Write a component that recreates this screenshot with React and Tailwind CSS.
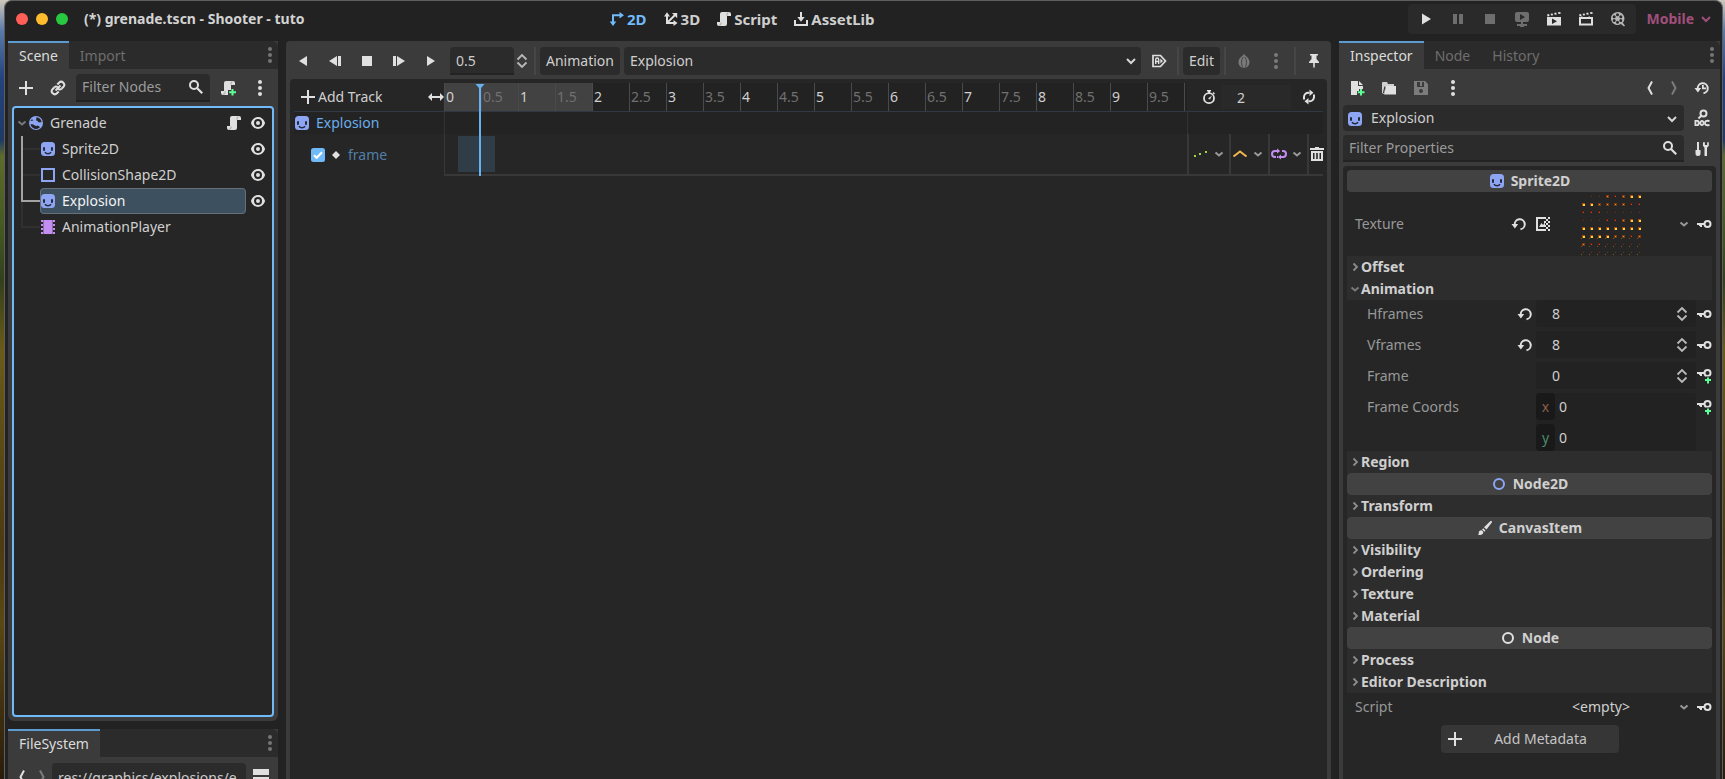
import React from "react";

/* ---------- icons (16px grid) ---------- */

function Svg({ children, className = "text-[#e0e0e0]", w = 16, h = 16 }) {
  return (
    <svg width={w} height={h} viewBox={`0 0 ${w} ${h}`} className={`shrink-0 ${className}`} fill="currentColor" aria-hidden="true">
      {children}
    </svg>
  );
}

const Plus = ({ className }) => (
  <Svg className={className}><path d="M7 1h2v6h6v2H9v6H7V9H1V7h6z" /></Svg>
);
const Dots = ({ className }) => (
  <Svg className={className}>
    <circle cx="8" cy="2" r="2" /><circle cx="8" cy="8" r="2" /><circle cx="8" cy="14" r="2" />
  </Svg>
);
const Link = () => (
  <Svg>
    <g transform="rotate(-45 8 8)" fill="none" stroke="currentColor" strokeWidth="2">
      <path d="M6 5H3.500a3 3 0 0 0 0 6H6M10 5h2.500a3 3 0 0 1 0 6H10M4.500 8h7" />
      <path d="M6 5c2 0 2.500 1.500 2.500 3M10 11c-2 0-2.500-1.500-2.500-3" />
    </g>
  </Svg>
);
const Search = () => (
  <Svg>
    <g fill="none" stroke="currentColor">
      <circle cx="6" cy="6" r="4" strokeWidth="2" />
      <path d="M9.200 9.200l5 5" strokeWidth="2.200" />
    </g>
  </Svg>
);
const scrollPath = "M6 1a2 2 0 0 0-2 2v8H1v2a2 2 0 0 0 2 2h6a2 2 0 0 0 2-2V5h4V3a2 2 0 0 0-2-2z";
const ScrollFolds = () => (
  <g fill="none" stroke="#303030" strokeWidth="0.800">
    <path d="M5 11.500v1.500a1.300 1.300 0 0 1-2 1" opacity="0.400" />
    <path d="M11 4.800V3.200a1.300 1.300 0 0 1 1.500-1.400" opacity="0.400" />
  </g>
);
const Script = ({ className }) => (
  <Svg className={className}><path d={scrollPath} /><ScrollFolds /></Svg>
);
const ScriptAdd = () => (
  <Svg>
    <path d="M6 1a2 2 0 0 0-2 2v8H1v2a2 2 0 0 0 2 2h5v-5h3V8V5h4V3a2 2 0 0 0-2-2z" />
    <ScrollFolds />
    <path d="M11.500 9h2v2.300H16v2h-2.500V15.500h-2v-2.200H9.200v-2h2.300z" fill="#5fff97" />
  </Svg>
);
const Eye = () => (
  <Svg>
    <path fillRule="evenodd" d="M8 2C5.400 2 2.200 4 1 7.700v.6C2.200 12.200 5.500 14 8 14s5.800-1.800 7-5.700v-.6C13.900 4 10.600 2 8 2zm0 2a4 4 0 0 1 0 8 4 4 0 0 1 0-8zm0 2a2 2 0 1 0 0 4 2 2 0 0 0 0-4z" />
  </Svg>
);
const ChevronDown = ({ className }) => (
  <Svg className={className}><path d="M4 6l4 4 4-4" fill="none" stroke="currentColor" strokeWidth="2" /></Svg>
);
const SmallDown = ({ className = "text-[#9a9a9a]" }) => (
  <Svg className={className} w={12} h={12}><path d="M2.500 4.500L6 7.500l3.500-3" fill="none" stroke="currentColor" strokeWidth="2" /></Svg>
);
const SmallRight = () => (
  <Svg className="text-[#8c8c8c]" w={12} h={12}><path d="M4.500 2.500L8 6 4.500 9.500" fill="none" stroke="currentColor" strokeWidth="1.800" /></Svg>
);
const Sprite = () => (
  <Svg className="text-[#8da5f3]">
    <rect x="1" y="1" width="14" height="14" rx="3.500" />
    <g fill="#252a3a">
      <rect x="3" y="6" width="2" height="4" rx="1" />
      <rect x="11" y="6" width="2" height="4" rx="1" />
    </g>
    <path d="M5 11.200c1.200 2.200 4.800 2.200 6 0" fill="none" stroke="#252a3a" strokeWidth="1.500" />
  </Svg>
);
const RigidBody = () => (
  <Svg className="text-[#8da5f3]">
    <circle cx="8" cy="8" r="7" />
    <path d="M8.300 2.300a5.700 5.700 0 0 1 5.300 5c-1-.2-2-.2-2.900.1A3.200 3.200 0 0 0 8 5.300c.4-1 .5-2 .3-3z" fill="#262626" />
    <path d="M2.400 9.500c1.500-.4 2.700-.3 3.800.5a3.200 3.200 0 0 0 3.600.6c.9.300 1.600.9 2.200 1.600A5.700 5.700 0 0 1 2.400 9.500z" fill="#262626" />
    <path d="M4 4.200l1.400 1.300-2.900.6A5 5 0 0 1 4 4.200z" fill="#262626" />
  </Svg>
);
const Collision = () => (
  <Svg className="text-[#8da5f3]"><path fillRule="evenodd" d="M1 1h14v14H1zM3 3v10h10V3z" /></Svg>
);
const AnimPlayer = () => (
  <Svg className="text-[#c38ef1]">
    <path fillRule="evenodd" d="M1 1h14v14H1zM1 3v2h2V3zM1 7v2h2V7zM1 11v2h2v-2zM13 3v2h2V3zM13 7v2h2V7zM13 11v2h2v-2z" />
    <path d="M3.500 1v14M12.500 1v14" stroke="#262626" strokeWidth="1" opacity="0.350" />
  </Svg>
);
const Undo = () => (
  <Svg>
    <path d="M3.800 9A5 5 0 1 1 9.500 13.200" fill="none" stroke="currentColor" strokeWidth="2" />
    <path d="M0.500 8h6.700l-3.300 4.500z" />
  </Svg>
);
const Key = ({ plus }) => (
  <Svg>
    <circle cx="11.500" cy={plus ? 5 : 8} r="3" fill="none" stroke="currentColor" strokeWidth="2" />
    <path d={plus ? "M1 4h8v2H6v2H4V7H3V6H1z" : "M1 7h8v2H6v2H4v-1H3V9H1z"} />
    {plus && (
      <>
        <path d="M10 8.500h4V10h2v4h-2v2h-4v-2H8v-4h2z" fill="#262626" />
        <path d="M11 9.500h2V11h2v2h-2v2.500h-2V13H9v-2h2z" fill="#5fff97" />
      </>
    )}
  </Svg>
);
const Spin = () => (
  <Svg className="text-[#b9b9b9]">
    <path d="M3.500 6.500L8 2l4.500 4.500M3.500 9.500L8 14l4.500-4.500" fill="none" stroke="currentColor" strokeWidth="1.800" />
  </Svg>
);
const Ring = ({ className }) => (
  <Svg className={className}><circle cx="8" cy="8" r="5" fill="none" stroke="currentColor" strokeWidth="2" /></Svg>
);
const Brush = () => (
  <Svg>
    <path d="M14.500 1c.6.300.7.900.3 1.500L9.500 9.500 7 7.200l6-5.800c.5-.5 1-.6 1.500-.4zM6.200 8.200l2.300 2.200-1.200 1.300-2.200-2.200z" />
    <path d="M4 10.200c1.500.2 2.500 1.300 2.300 2.500C6 14.500 3.500 15.300 1 15c1-.8.6-1.600.8-2.800.2-1.300 1.200-2 2.200-2z" />
  </Svg>
);
const Chev = ({ right, className }) => (
  <Svg className={className}>
    <path d={right ? "M6 1.500L9.500 8 6 14.500" : "M10 1.500L6.500 8l3.500 6.500"} fill="none" stroke="currentColor" strokeWidth="2" />
  </Svg>
);
const Clapper = ({ play }) => (
  <Svg>
    <path d="M1 3.600l2-.5.600 1.800-2 .5zM4.600 2.800l2-.4.500 1.800-2 .4zM8.200 2l2-.4.500 1.800-2 .4zM12 1.300l2.300-.4.400 1.800-2.300.4z" />
    {play ? (
      <path fillRule="evenodd" d="M1 6h14v8.500H1zM6 7.500v5.500l5-2.750z" />
    ) : (
      <path fillRule="evenodd" d="M1 6h2V5.500h1.500V6h6V5.500H12V6h3v8.500H1zM3 8v4.500h10V8z" />
    )}
  </Svg>
);
const Film = () => (
  <Svg className="text-[#b5b5b5]">
    <path fillRule="evenodd" d="M7.500 1a6.500 6.500 0 1 0 3.300 12.100L14 15.500l1-.8-2.200-3A6.500 6.500 0 0 0 7.500 1zM7.500 2.300a1.500 1.500 0 1 1 0 3 1.500 1.500 0 0 1 0-3zM4.200 4.300a1.500 1.500 0 1 1 0 3 1.500 1.500 0 0 1 0-3zM10.800 4.300a1.500 1.500 0 1 1 0 3 1.500 1.500 0 0 1 0-3zM4.200 8a1.500 1.500 0 1 1 0 3 1.500 1.500 0 0 1 0-3zM10.800 8a1.500 1.500 0 1 1 0 3 1.500 1.500 0 0 1 0-3zM7.500 9.800a1.500 1.500 0 1 1 0 3 1.500 1.500 0 0 1 0-3z" />
  </Svg>
);
const Remote = () => (
  <Svg className="text-[#6e6e6e]">
    <path fillRule="evenodd" d="M3 1h10a2 2 0 0 1 2 2v6a2 2 0 0 1-2 2H9v2h4v2h-3a2 2 0 0 1-4 0H3v-2h4v-2H3a2 2 0 0 1-2-2V3a2 2 0 0 1 2-2zM6 3v6l5-3z" />
  </Svg>
);
const Disk = () => (
  <Svg className="text-[#7c7c7c]">
    <path fillRule="evenodd" d="M1 1h11l3 3v11H1zM4 2v5h7V2H9v4H7V2zM8 9a2 2 0 1 0 0 4 2 2 0 0 0 0-4z" />
  </Svg>
);
const Doc = () => (
  <Svg w={16} h={18}>
    <circle cx="9.500" cy="4.500" r="3" fill="none" stroke="currentColor" strokeWidth="2" />
    <path d="M7.500 6.500L4.500 9.500" stroke="currentColor" strokeWidth="2" />
    <path fillRule="evenodd" d="M0.500 11h3.200c1.500 0 2 1.500 2 3s-.5 3-2 3H.5zM2.300 12.700v2.600h.9c.8 0 .8-2.600 0-2.600zM8 11c3.200 0 3.200 6 0 6s-3.200-6 0-6zm0 1.700c-1 0-1 2.600 0 2.600s1-2.600 0-2.600z" />
    <path d="M15.500 12c-3.500-.6-4.500 0-4.500 2s1 2.600 4.500 2" fill="none" stroke="currentColor" strokeWidth="1.900" />
  </Svg>
);
const Tools = () => (
  <Svg>
    <path d="M3 1h2v8h1.500v3.500a2 2 0 0 1-5 0V9H3zM9 1.300v3.500l1.500 2V15h2.500V6.800l1.800-2V1.300h-1.600v2.800h-2.300V1.300z" />
  </Svg>
);
const History = () => (
  <Svg>
    <path d="M3.800 9A5 5 0 1 1 9.500 13.200" fill="none" stroke="currentColor" strokeWidth="2" />
    <path d="M0.500 8h6.700l-3.300 4.500zM8 5h1.800v2.500H12V9.200H8z" />
  </Svg>
);
const Stopwatch = () => (
  <Svg>
    <circle cx="8" cy="9.200" r="5" fill="none" stroke="currentColor" strokeWidth="1.800" />
    <path d="M6 1h4v1.600H9v2H7v-2H6zM12.500 3l1.500 1.500-1 1L11.500 4zM7 9.500L11 6.500 9 10.500z" />
  </Svg>
);
const Loop = ({ className }) => (
  <Svg className={className}>
    <path d="M3 10.500V8a4.300 4.300 0 0 1 4.500-4.300h1M13 5.500V8a4.300 4.300 0 0 1-4.500 4.300h-1" fill="none" stroke="currentColor" strokeWidth="2" />
    <path d="M8.500 0.500v6.400l4-3.200zM7.500 9.100v6.400l-4-3.200z" />
  </Svg>
);
const Trash = () => (
  <Svg>
    <path d="M6 1h4v1h5v2H1V2h5z" />
    <path fillRule="evenodd" d="M2 5h12v10H2zM4 7v6h1.500V7zM7.200 7v6h1.600V7zM10.500 7v6H12V7z" />
  </Svg>
);
const Pin = () => (
  <Svg><path d="M4 1h8v1.500h-1.500V6L13 9v1H8.800v3.500L8 15.500l-.8-2V10H3V9l2.500-3V2.500H4z" /></Svg>
);
const AutoPlay = () => (
  <Svg>
    <path d="M2 2.500h7.500L14.500 8l-5 5.500H2z" fill="none" stroke="currentColor" strokeWidth="1.700" />
    <path d="M4.700 11V6.500a1.500 1.500 0 0 1 3 0V11M4.700 8.500h3" fill="none" stroke="currentColor" strokeWidth="1.400" />
    <path d="M9.300 5.500L12 8l-2.700 2.500z" />
  </Svg>
);
const Onion = () => (
  <Svg className="text-[#7a7a7a]">
    <path d="M8 .5c0 2-5.500 4-5.500 8.500 0 3.500 2.500 5.800 5.500 6 3-.2 5.500-2.500 5.500-6C13.500 4.500 8 2.500 8 .5z" />
    <path d="M7.300 4C5 7 5 11.500 7 14.500M8.700 4C11 7 11 11.500 9 14.500" fill="none" stroke="#3b3b3b" strokeWidth="0.900" />
  </Svg>
);
const Axes2D = () => (
  <Svg>
    <path d="M4 12V4.300h7" fill="none" stroke="currentColor" strokeWidth="2" />
    <path d="M10.500 1v6.600L15 4.300zM.7 10.500h6.600L4 15z" />
  </Svg>
);
const Axes3D = () => (
  <Svg>
    <path d="M4 4v8h7M4 12l8-8" fill="none" stroke="currentColor" strokeWidth="2" />
    <path d="M1 5.500h6L4 1.200zM10.500 9v6l4-3zM9 2h5.200v5.200z" />
  </Svg>
);
const Asset = () => (
  <Svg>
    <path d="M2 9v5h12V9" fill="none" stroke="currentColor" strokeWidth="2" />
    <path d="M7 1h2v5h2.700L8 10.800 4.300 6H7z" />
  </Svg>
);
const TexIcon = () => (
  <Svg>
    <path d="M1 1h8v2H3v10h6v2H1z" />
    <path d="M4 11l2.500-4L8 9l2-2.500V11z" />
    <path d="M9 1h2v2H9zM13 1h2v2h-2zM11 3h2v2h-2zM9 5h2v2H9zM13 5h2v2h-2zM11 7h2v2h-2zM9 9h2v2H9zM13 9h2v2h-2zM11 11h2v2h-2zM9 13h2v2H9zM13 13h2v2h-2z" />
  </Svg>
);

/* ---------- shared controls ---------- */

function IconButton({ label, children, className = "h-7 w-8" }) {
  return (
    <button type="button" aria-label={label} className={`flex shrink-0 items-center justify-center ${className}`}>
      {children}
    </button>
  );
}

function DockTabs({ tabs }) {
  return (
    <div className="flex h-7 shrink-0 items-stretch rounded-tr-md bg-[#2b2b2b]" role="tablist">
      {tabs.map((t, i) => (
        <button
          key={t}
          type="button"
          role="tab"
          aria-selected={i === 0}
          className={
            i === 0
              ? "border-t-2 border-[#5b9bd0] bg-[#3b3b3b] px-[11px] text-[#dcdcdc]"
              : "border-t-2 border-transparent px-[11px] text-[#6e6e6e]"
          }
        >
          {t}
        </button>
      ))}
      <IconButton label="Dock options" className="ml-auto w-4">
        <Dots className="text-[#757575]" />
      </IconButton>
    </div>
  );
}

const Sep = ({ className = "mx-1" }) => <div className={`h-7 w-0.5 shrink-0 bg-[#464646] ${className}`} />;

/* ---------- scene tree ---------- */

function Connector({ kind }) {
  return (
    <svg width="20" height="26" className="shrink-0" aria-hidden="true">
      {kind === "pass" && (
        <>
          <path d="M2 13h18" stroke="#303030" strokeWidth="2" />
          <path d="M2 0v26" stroke="#a3a3a3" strokeWidth="2" />
        </>
      )}
      {kind === "active" && (
        <>
          <path d="M2 13v13" stroke="#303030" strokeWidth="2" />
          <path d="M2 0v13h18" fill="none" stroke="#a3a3a3" strokeWidth="2" />
        </>
      )}
      {kind === "last" && <path d="M2 0v13h18" fill="none" stroke="#303030" strokeWidth="2" />}
    </svg>
  );
}

const treeNodes = [
  { name: "Sprite2D", icon: <Sprite />, kind: "pass", eye: true },
  { name: "CollisionShape2D", icon: <Collision />, kind: "pass", eye: true },
  { name: "Explosion", icon: <Sprite />, kind: "active", eye: true, selected: true },
  { name: "AnimationPlayer", icon: <AnimPlayer />, kind: "last" },
];

function SceneDock() {
  return (
    <section className="flex min-h-0 flex-1 flex-col rounded-b-md bg-[#3b3b3b]">
      <DockTabs tabs={["Scene", "Import"]} />
      <div className="flex h-[37px] shrink-0 items-center pt-px px-0.5">
        <IconButton label="Add node"><Plus /></IconButton>
        <IconButton label="Instantiate scene"><Link /></IconButton>
        <label className="mx-0.5 flex h-7 min-w-0 flex-1 items-center rounded-t border-b-2 border-[#232323] bg-[#2b2b2b] px-1.5">
          <input aria-label="Filter Nodes" placeholder="Filter Nodes" className="w-full min-w-0 flex-1 bg-transparent placeholder:text-[#9b9b9b] outline-none" />
          <Search />
        </label>
        <IconButton label="Attach script"><ScriptAdd /></IconButton>
        <IconButton label="More scene options"><Dots /></IconButton>
      </div>
      <div className="mx-1 mb-1 flex-1 rounded-sm border-2 border-[#70bafa] bg-[#262626] pt-0.5">
        <div className="flex h-[26px] items-center pr-1.5 pl-0.5">
          <SmallDown className="text-[#7a7a7a]" />
          <span className="flex flex-1 items-center gap-1.5 text-[#d0d0d0]"><RigidBody />Grenade</span>
          <Script className="mr-2 text-[#e0e0e0]" />
          <button type="button" aria-label="Toggle visibility of Grenade"><Eye /></button>
        </div>
        {treeNodes.map((n) => (
          <div key={n.name} className="flex h-[26px] items-center pr-1.5 pl-1.5">
            <Connector kind={n.kind} />
            <div
              className={
                n.selected
                  ? "flex h-full flex-1 items-center gap-1.5 rounded-sm bg-[#3d5060] text-[#f2f2f2] outline -outline-offset-1 outline-[#667079]"
                  : "flex h-full flex-1 items-center gap-1.5 text-[#d0d0d0]"
              }
            >
              {n.icon}{n.name}
            </div>
            <div className="ml-1 flex w-4">
              {n.eye && <button type="button" aria-label={`Toggle visibility of ${n.name}`}><Eye /></button>}
            </div>
          </div>
        ))}
      </div>
    </section>
  );
}

function FileSystemDock() {
  return (
    <section className="h-[50px] shrink-0 overflow-hidden bg-[#3b3b3b]">
      <DockTabs tabs={["FileSystem"]} />
      <div className="flex items-start pt-1.5 pl-0.5">
        <IconButton label="Back" className="h-7 w-6"><Chev className="text-[#e0e0e0]" /></IconButton>
        <IconButton label="Forward" className="mr-0.5 h-7 w-4"><Chev right className="text-[#7c7c7c]" /></IconButton>
        <input
          aria-label="Path"
          defaultValue="res://graphics/explosions/e"
          className="h-7 min-w-0 flex-1 rounded bg-[#2b2b2b] px-1.5 text-[#cccccc] outline-none"
        />
        <IconButton label="Change split mode" className="mr-0.5 h-7 w-[30px]">
          <Svg className="text-[#e0e0e0]"><path d="M0 0h16v6H0zM0 8h16v6H0z" /></Svg>
        </IconButton>
      </div>
    </section>
  );
}

/* ---------- animation editor ---------- */

const ticks = Array.from({ length: 20 }, (_, i) => i / 2);

function Transport() {
  return (
    <div className="flex h-[38px] shrink-0 items-center px-px pt-0.5">
      <IconButton label="Play backwards"><Svg><path d="M12 3v10L4 8z" /></Svg></IconButton>
      <IconButton label="Play backwards from current"><Svg><path d="M10 3v10L2 8zM11 3h3v10h-3z" /></Svg></IconButton>
      <IconButton label="Stop"><Svg><path d="M3 3h10v10H3z" /></Svg></IconButton>
      <IconButton label="Play from current"><Svg><path d="M6 3v10l8-5zM2 3h3v10H2z" /></Svg></IconButton>
      <IconButton label="Play"><Svg><path d="M4 3v10l8-5z" /></Svg></IconButton>
      <input aria-label="Animation position" defaultValue="0.5" className="ml-[3px] h-7 w-16 rounded-t border-b-2 border-[#232323] bg-[#2b2b2b] px-1.5 text-[#cccccc] outline-none" />
      <IconButton label="Step position" className="h-7 w-4"><Spin /></IconButton>
      <Sep />
      <button type="button" className="h-7 rounded bg-[#2b2b2b] px-1.5 text-[#cfcfcf]">Animation</button>
      <div className="relative ml-1 min-w-0 flex-1">
        <select aria-label="Current animation" className="h-7 w-full appearance-none rounded bg-[#2b2b2b] px-1.5 text-[#cfcfcf] outline-none">
          <option>Explosion</option>
        </select>
        <span className="pointer-events-none absolute top-1.5 right-0.5"><ChevronDown className="text-[#d5d5d5]" /></span>
      </div>
      <IconButton label="Autoplay on load" className="ml-0.5 h-7 w-8"><AutoPlay /></IconButton>
      <Sep className="mr-1 ml-0.5" />
      <button type="button" className="h-7 rounded bg-[#2b2b2b] px-1.5 text-[#cfcfcf]">Edit</button>
      <Sep className="mr-0.5 ml-1" />
      <IconButton label="Onion skinning"><Onion /></IconButton>
      <IconButton label="Onion skinning options"><Dots className="text-[#7a7a7a]" /></IconButton>
      <Sep className="mx-0.5" />
      <IconButton label="Pin animation player"><Pin /></IconButton>
    </div>
  );
}

function TrackOption({ label, children, className = "w-[39px]" }) {
  return (
    <button type="button" aria-label={label} className={`flex shrink-0 items-center justify-end gap-1 border-l-2 border-[#383838] pr-1 ${className}`}>
      {children}
      <SmallDown />
    </button>
  );
}

function AnimationPanel() {
  return (
    <main className="flex min-w-0 flex-1 flex-col rounded-t bg-[#3b3b3b]">
      <Transport />
      <div className="mx-1 flex-1 rounded-t bg-[#262626] p-1">
        <div className="relative">
          <div className="flex h-7 items-stretch">
            <div className="flex w-[150px] shrink-0 items-center pl-1.5">
              <button type="button" className="flex items-center gap-0.5 text-[#cfcfcf]"><Plus />Add Track</button>
              <span className="ml-auto">
                <Svg><path d="M4 7h8V4l4 4-4 4V9H4v3L0 8l4-4z" /></Svg>
              </span>
            </div>
            <div className="flex min-w-0 flex-1 overflow-hidden bg-[#222222]">
              {ticks.map((t) => (
                <div
                  key={t}
                  className={`flex w-[37px] shrink-0 items-center border-l border-[#4a4a4a] pl-px ${t < 2 ? "bg-[#424242]" : ""} ${Number.isInteger(t) ? "text-[#d0d0d0]" : "text-[#707070]"}`}
                >
                  {t}
                </div>
              ))}
              <div className="border-l border-[#4a4a4a]" />
            </div>
            <div className="flex w-[136px] shrink-0 items-center">
              <span className="flex w-[34px] justify-center pl-2.5"><Stopwatch /></span>
              <input aria-label="Animation length" defaultValue="2" className="h-6 w-[70px] bg-[#292929] px-4 text-[#cfcfcf] outline-none" />
              <IconButton label="Animation looping" className="h-7 flex-1 pl-1"><Loop /></IconButton>
            </div>
          </div>
          <div className="h-px bg-[#303844]" />
          <div className="flex h-[22px] items-stretch bg-[#232323]">
            <div className="flex w-[150px] shrink-0 items-center gap-1.5 text-[#6aaeea]"><Sprite />Explosion</div>
            <div className="flex-1 border-x border-[#2c3339]" />
            <div className="w-[135px]" />
          </div>
          <div className="flex h-[42px] items-stretch">
            <label className="flex w-[150px] shrink-0 items-center pl-4 text-[#517fa9]">
              <input type="checkbox" defaultChecked className="peer sr-only" />
              <Svg className="text-[#70bafa]">
                <rect x="1" y="1" width="14" height="14" rx="2.500" />
                <path d="M4 8.200l2.700 2.600L12 5.300" fill="none" stroke="#fff" strokeWidth="2.200" />
              </Svg>
              <Svg className="mr-1 ml-0.5 text-[#e0e0e0]"><path d="M8 4l4 4-4 4-4-4z" /></Svg>
              frame
            </label>
            <div className="flex-1 border-b-2 border-l border-[#383838] py-0.5 pl-[13px]">
              <div className="h-full w-[37px] bg-[#303d47]" />
            </div>
            <div className="flex w-[136px] border-b-2 border-[#383838]">
              <TrackOption label="Update mode" className="w-[42px]">
                <Svg className="text-[#a1d34b]"><path d="M1 9h2v2H1zM6 7h2v2H6zM12 5h2v2h-2z" /></Svg>
              </TrackOption>
              <TrackOption label="Interpolation mode">
                <Svg className="text-[#f5b84d]"><path d="M1.500 10.500L8 5.500l6.500 5" fill="none" stroke="currentColor" strokeWidth="2" /></Svg>
              </TrackOption>
              <TrackOption label="Loop wrap mode">
                <Svg className="text-[#c38ef1]">
                  <path d="M6 5H4a3 3 0 0 0 0 6h1M10 11h2a3 3 0 0 0 0-6h-1M6 11h1" fill="none" stroke="currentColor" strokeWidth="2" />
                  <path d="M6 2.500v5L9.200 5zM10 8.500v5L6.800 11z" />
                </Svg>
              </TrackOption>
              <button type="button" aria-label="Remove track" className="flex flex-1 items-center justify-center border-l-2 border-[#383838]"><Trash /></button>
            </div>
          </div>
          <svg width="10" height="93" className="absolute top-0 left-[181px]" aria-hidden="true">
            <path d="M.5 1h9L6 5v88H4V5z" fill="#66b2f0" />
          </svg>
        </div>
      </div>
    </main>
  );
}

/* ---------- inspector ---------- */

const heat = [
  [0, 1, 1, 4, 3, 4, 5, 5],
  [5, 5, 4, 4, 4, 4, 3, 3],
  [3, 3, 3, 2, 2, 1, 1, 2],
  [2, 1, 1, 3, 3, 4, 5, 5],
  [5, 5, 5, 5, 5, 5, 5, 5],
  [5, 5, 5, 5, 4, 4, 3, 4],
  [4, 3, 3, 2, 2, 2, 2, 2],
  [2, 2, 2, 1, 1, 1, 1, 1],
];
const core = ["", "#5a3a1a", "#6d2c17", "#d04a12", "#f08a1e", "#ffd23c"];
const halo = ["", "#2e2621", "#33251f", "#6b1f10", "#7a3a12", "#a34a10"];

function SheetPreview() {
  return (
    <svg width="64" height="64" viewBox="0 0 64 64" shapeRendering="crispEdges" role="img" aria-label="Explosion sprite sheet">
      {heat.map((row, r) =>
        row.map((v, c) =>
          v ? (
            <g key={`${r}-${c}`}>
              <rect x={c * 8 + 3} y={r * 8 + 3} width={v > 3 ? 3 : 2} height={v > 3 ? 3 : 2} fill={halo[v]} />
              <rect x={c * 8 + 4} y={r * 8 + 4} width={v > 4 ? 2 : 1} height={v > 4 ? 2 : 1} fill={core[v]} />
              {r > 4 && <rect x={c * 8 + 2} y={r * 8 + 6} width="1" height="1" fill="#7a5a14" />}
            </g>
          ) : null
        )
      )}
    </svg>
  );
}

function Category({ icon, name }) {
  return (
    <h2 className="flex h-[22px] items-center justify-center gap-1.5 rounded bg-[#424242] font-bold text-[#d0d0d0]">{icon}{name}</h2>
  );
}

function Group({ name, open }) {
  return (
    <button type="button" aria-expanded={!!open} className="flex h-[22px] w-full items-center bg-[#2d2d2d] pl-0.5 font-bold text-[#cfcfcf]">
      {open ? <SmallDown className="text-[#7a7a7a]" /> : <SmallRight />}
      {name}
    </button>
  );
}

function NumberRow({ name, value, reset, plus }) {
  const id = `prop-${name}`;
  return (
    <div className="flex h-[27px] items-center">
      <label htmlFor={id} className="flex-1 pl-5 text-[#989898]">{name}</label>
      {reset && <button type="button" aria-label={`Reset ${name}`} className="mr-[3px]"><Undo /></button>}
      <div className="flex h-full w-40 items-center rounded bg-[#222222] pr-1.5">
        <input id={id} defaultValue={value} className="min-w-0 flex-1 bg-transparent pl-4 text-[#cfcfcf] outline-none" />
        <button type="button" aria-label={`Step ${name}`}><Spin /></button>
      </div>
      <button type="button" aria-label={`Key ${name}`}><Key plus={plus} /></button>
    </div>
  );
}

function InspectorDock() {
  return (
    <aside className="flex w-[381px] shrink-0 flex-col bg-[#3b3b3b]">
      <DockTabs tabs={["Inspector", "Node", "History"]} />
      <div className="flex h-9 shrink-0 items-center pt-0.5 pl-0.5">
        <IconButton label="New resource">
          <Svg>
            <path d="M2 1h7v5h5v3h-4v2H8v4H2zM10 1l4 4h-4z" />
            <path d="M11 9h2v2.300h2.500v2H13v2.200h-2v-2.200H8.800v-2H11z" fill="#5fff97" />
          </Svg>
        </IconButton>
        <IconButton label="Open resource">
          <Svg>
            <path fillRule="evenodd" d="M1 3a1 1 0 0 1 1-1h4l1 2h6v2H6L4 8v4L2.500 14 1 13z" opacity="0.900" />
            <path d="M4 6.500L2.500 13" stroke="#3b3b3b" strokeWidth="1.200" />
            <path d="M5 6h10v8.500H3z" />
          </Svg>
        </IconButton>
        <IconButton label="Save resource"><Disk /></IconButton>
        <IconButton label="Resource options"><Dots /></IconButton>
        <span className="flex-1" />
        <IconButton label="Previous object" className="h-7 w-6"><Chev className="text-[#e0e0e0]" /></IconButton>
        <IconButton label="Next object" className="h-7 w-6"><Chev right className="text-[#7c7c7c]" /></IconButton>
        <IconButton label="Object history" className="mr-0.5 h-7 w-8"><History /></IconButton>
      </div>
      <div className="flex h-[26px] shrink-0 items-center pl-1">
        <div className="relative min-w-0 flex-1">
          <select aria-label="Inspected object" className="h-[26px] w-full appearance-none rounded bg-[#2b2b2b] pl-7 text-[#cfcfcf] outline-none">
            <option>Explosion</option>
          </select>
          <span className="pointer-events-none absolute top-1.5 left-1"><Sprite /></span>
          <span className="pointer-events-none absolute top-1.5 right-1"><ChevronDown className="text-[#d5d5d5]" /></span>
        </div>
        <IconButton label="Open documentation" className="h-7 w-9"><Doc /></IconButton>
      </div>
      <div className="mt-1 flex h-[27px] shrink-0 items-center pl-1">
        <label className="flex h-full min-w-0 flex-1 items-center rounded-t border-b-2 border-[#232323] bg-[#2b2b2b] px-1.5">
          <input aria-label="Filter Properties" placeholder="Filter Properties" className="min-w-0 flex-1 bg-transparent placeholder:text-[#9b9b9b] outline-none" />
          <Search />
        </label>
        <IconButton label="Property tools" className="h-7 w-9"><Tools /></IconButton>
      </div>
      <div className="mx-1 mt-1 flex-1 rounded-t bg-[#262626] p-1">
        <Category icon={<Sprite />} name="Sprite2D" />
        <div className="flex h-16 items-center">
          <span className="flex-1 pl-2 text-[#989898]">Texture</span>
          <button type="button" aria-label="Reset Texture" className="mr-2"><Undo /></button>
          <TexIcon />
          <div className="flex w-[145px] items-center justify-between pr-1.5 pl-7">
            <SheetPreview />
            <button type="button" aria-label="Texture options"><SmallDown /></button>
          </div>
          <button type="button" aria-label="Key Texture"><Key /></button>
        </div>
        <Group name="Offset" />
        <Group name="Animation" open />
        <div className="flex flex-col gap-1">
          <NumberRow name="Hframes" value="8" reset />
          <NumberRow name="Vframes" value="8" reset />
          <NumberRow name="Frame" value="0" plus />
          <div className="flex items-start">
            <span className="flex h-[27px] flex-1 items-center pl-5 text-[#989898]">Frame Coords</span>
            <div className="flex w-40 flex-col gap-1 rounded bg-[#222222]">
              <label className="flex h-[27px] items-center">
                <span className="flex h-full w-[19px] items-center justify-center rounded bg-[#191919] text-[#8d5f4b]">x</span>
                <input defaultValue="0" className="min-w-0 flex-1 bg-transparent pl-1 text-[#cfcfcf] outline-none" />
              </label>
              <label className="flex h-[27px] items-center">
                <span className="flex h-full w-[19px] items-center justify-center rounded bg-[#191919] text-[#4f8a69]">y</span>
                <input defaultValue="0" className="min-w-0 flex-1 bg-transparent pl-1 text-[#cfcfcf] outline-none" />
              </label>
            </div>
            <button type="button" aria-label="Key Frame Coords" className="flex h-[27px] items-center"><Key plus /></button>
          </div>
        </div>
        <Group name="Region" />
        <Category icon={<Ring className="text-[#8da5f3]" />} name="Node2D" />
        <Group name="Transform" />
        <Category icon={<Brush />} name="CanvasItem" />
        <Group name="Visibility" />
        <Group name="Ordering" />
        <Group name="Texture" />
        <Group name="Material" />
        <Category icon={<Ring />} name="Node" />
        <Group name="Process" />
        <Group name="Editor Description" />
        <div className="flex h-7 items-center">
          <span className="flex-1 pl-2 text-[#989898]">Script</span>
          <button type="button" className="flex w-40 items-center pr-1.5 text-[#cfcfcf]">
            <span className="mr-3 flex-1 text-center">&lt;empty&gt;</span>
            <SmallDown />
          </button>
          <button type="button" aria-label="Key Script"><Key /></button>
        </div>
        <button type="button" className="mx-auto mt-1 flex h-7 w-[178px] items-center rounded bg-[#363636] px-1.5 text-[#c4c4c4]">
          <Plus />
          <span className="flex-1 pl-1.5 text-center">Add Metadata</span>
        </button>
      </div>
    </aside>
  );
}

/* ---------- title bar ---------- */

function TitleBar() {
  return (
    <header className="flex h-10 shrink-0 items-start">
      <div className="flex h-9 w-[596px] shrink-0 items-center pl-[11px]">
        <span className="flex gap-2">
          <span className="size-3 rounded-full bg-[#ff5f57]" />
          <span className="size-3 rounded-full bg-[#febc2e]" />
          <span className="size-3 rounded-full bg-[#28c840]" />
        </span>
        <h1 className="ml-4 font-bold text-[#d3d3d3]">(*) grenade.tscn - Shooter - tuto</h1>
      </div>
      <nav className="flex h-9 items-center gap-4 pl-2 text-[15px] font-bold text-[#cfcfcf]">
        <button type="button" className="flex items-center gap-0.5 text-[#70bafa] [&>svg]:text-[#70bafa]"><Axes2D />2D</button>
        <button type="button" className="flex items-center gap-0.5"><Axes3D />3D</button>
        <button type="button" className="flex items-center gap-0.5"><Script className="text-[#e0e0e0]" />Script</button>
        <button type="button" className="flex items-center gap-0.5"><Asset />AssetLib</button>
      </nav>
      <div className="mt-[3px] ml-auto flex h-[30px] items-center rounded bg-[#2a2a2a] px-0.5">
        <IconButton label="Run project"><Svg><path d="M4 2.500v11l9-5.500z" /></Svg></IconButton>
        <IconButton label="Pause"><Svg className="text-[#6e6e6e]"><path d="M3 3h4v10H3zM9 3h4v10H9z" /></Svg></IconButton>
        <IconButton label="Stop running"><Svg className="text-[#6e6e6e]"><path d="M3 3h10v10H3z" /></Svg></IconButton>
        <IconButton label="Remote debug"><Remote /></IconButton>
        <IconButton label="Run current scene"><Clapper play /></IconButton>
        <IconButton label="Run specific scene"><Clapper /></IconButton>
        <IconButton label="Movie maker mode"><Film /></IconButton>
      </div>
      <button type="button" className="mr-2 ml-2.5 flex h-9 items-center gap-1 font-bold text-[#a04f7c]">
        Mobile
        <ChevronDown className="text-[#a04f7c]" />
      </button>
    </header>
  );
}

export default function App() {
  return (
    <div className="h-screen overflow-hidden bg-[linear-gradient(to_bottom,#cfc8bb_0%,#5a7aa8_4%,#24427c_10%,#1f3a66_18%,#5e6b2a_20%,#41571f_30%,#33401c_36%,#6b5a17_45%,#4d3a10_70%,#5a4712_80%,#2a1c0c_100%)] pr-0.5 pl-1 font-['Noto_Sans',sans-serif] text-[14px] leading-5">
      <div className="flex h-full flex-col rounded-t-lg border-x border-t border-[#5b5f5f] bg-[#222222]">
        <TitleBar />
        <div className="flex min-h-0 flex-1 gap-2 pr-0.5 pl-[3px]">
          <div className="flex w-[270px] shrink-0 flex-col gap-2">
            <SceneDock />
            <FileSystemDock />
          </div>
          <AnimationPanel />
          <InspectorDock />
        </div>
      </div>
    </div>
  );
}
